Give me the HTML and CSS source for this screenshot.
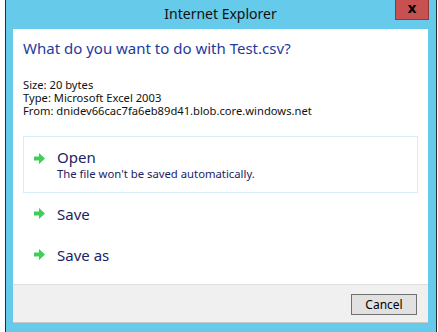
FILE: index.html
```html
<!DOCTYPE html>
<html lang="en">

<head>
    <meta charset="UTF-8">
    <meta name="viewport" content="width=device-width, initial-scale=1.0">
    <title>Internet Explorer</title>
    <link rel="stylesheet" href="styles.css">
</head>

<body>
    <div class="window">
        <div class="titlebar">
            <span></span>
            <span class="title">Internet Explorer</span>
            <button class="close-btn">x</button>
        </div>
        <div class="dialog">
            <h1 class="question">What do you want to do with Test.csv?</h1>
            <ul class="file-info">
                <li>Size: 20 bytes</li>
                <li>Type: Microsoft Excel 2003</li>
                <li>From: dnidev66cac7fa6eb89d41.blob.core.windows.net</li>
            </ul>
            <div class="options">
                <div class="option selected">
                    <svg class="arrow" width="11" height="11" viewBox="0 0 11 11"><path d="M0 3.5H5V0L11 5.5L5 11V7.5H0Z" /></svg>
                    <div>
                        <div class="option-label">Open</div>
                        <div class="option-note">The file won't be saved automatically.</div>
                    </div>
                </div>
                <div class="option">
                    <svg class="arrow" width="11" height="11" viewBox="0 0 11 11"><path d="M0 3.5H5V0L11 5.5L5 11V7.5H0Z" /></svg>
                    <div class="option-label">Save</div>
                </div>
                <div class="option">
                    <svg class="arrow" width="11" height="11" viewBox="0 0 11 11"><path d="M0 3.5H5V0L11 5.5L5 11V7.5H0Z" /></svg>
                    <div class="option-label">Save as</div>
                </div>
            </div>
        </div>
        <div class="footer">
            <button class="cancel-btn">Cancel</button>
        </div>
    </div>
</body>

</html>
```

FILE: styles.css
```css
body {
    font-family: "Noto Sans", "Open Sans", sans-serif;
    margin: 0;
    padding: 0;
    background-color: #fff;
}

.window {
    margin-left: 5px;
    width: 415px;
    height: 332px;
    padding: 0 8px 0 7px;
    background-color: #66caea;
    border-left: 1px solid #2b2b2b;
    border-right: 1px solid #2b2b2b;
    overflow: hidden;
}

/* Title bar */
.titlebar {
    display: grid;
    grid-template-columns: 1fr auto 1fr;
    align-items: start;
    height: 29px;
}

.title {
    font-size: 14px;
    line-height: 18px;
    padding-top: 5px;
    color: #111;
}

.close-btn {
    justify-self: end;
    width: 34px;
    height: 20px;
    margin-right: -1px;
    padding: 0 0 3px;
    background-color: #c75050;
    border: 1px solid #8f3838;
    border-top: none;
    color: #000;
    font-family: "DejaVu Sans", sans-serif;
    font-size: 14px;
    font-weight: bold;
    line-height: 14px;
}

/* Dialog body */
.dialog {
    height: 255px;
    padding: 9px 10px 0;
    background-color: #fff;
    box-sizing: border-box;
}

.question {
    margin: 0;
    font-size: 15px;
    font-weight: normal;
    line-height: 20px;
    color: #1f3a9c;
}

.file-info {
    list-style: none;
    margin: 20px 0 0;
    padding: 0;
    font-size: 11.2px;
    line-height: 13px;
    color: #111;
}

.options {
    margin-top: 19px;
}

.option {
    display: flex;
    align-items: center;
    gap: 12px;
    height: 39px;
    padding: 0 10px;
    border: 1px solid transparent;
    color: #1b2463;
}

.option.selected {
    height: 55px;
    border-color: #d8eef8;
}

.arrow {
    fill: #3ccf5a;
    flex-shrink: 0;
}

.option-label {
    font-size: 15px;
    line-height: 18px;
}

.option-note {
    font-size: 11.3px;
    line-height: 16px;
}

.selected .arrow {
    align-self: flex-start;
    margin-top: 16px;
}

/* Footer */
.footer {
    display: flex;
    justify-content: flex-end;
    height: 39px;
    padding: 9px 11px 0 0;
    box-sizing: border-box;
    background-color: #f0f0f0;
    border-top: 1px solid #dfdfdf;
    border-bottom: 1px solid #c8c8c8;
}

.cancel-btn {
    width: 66px;
    height: 21px;
    padding: 0;
    background-color: #e1e1e1;
    border: 1px solid #707070;
    font-family: "Noto Sans", sans-serif;
    font-size: 12px;
    color: #000;
}
```
